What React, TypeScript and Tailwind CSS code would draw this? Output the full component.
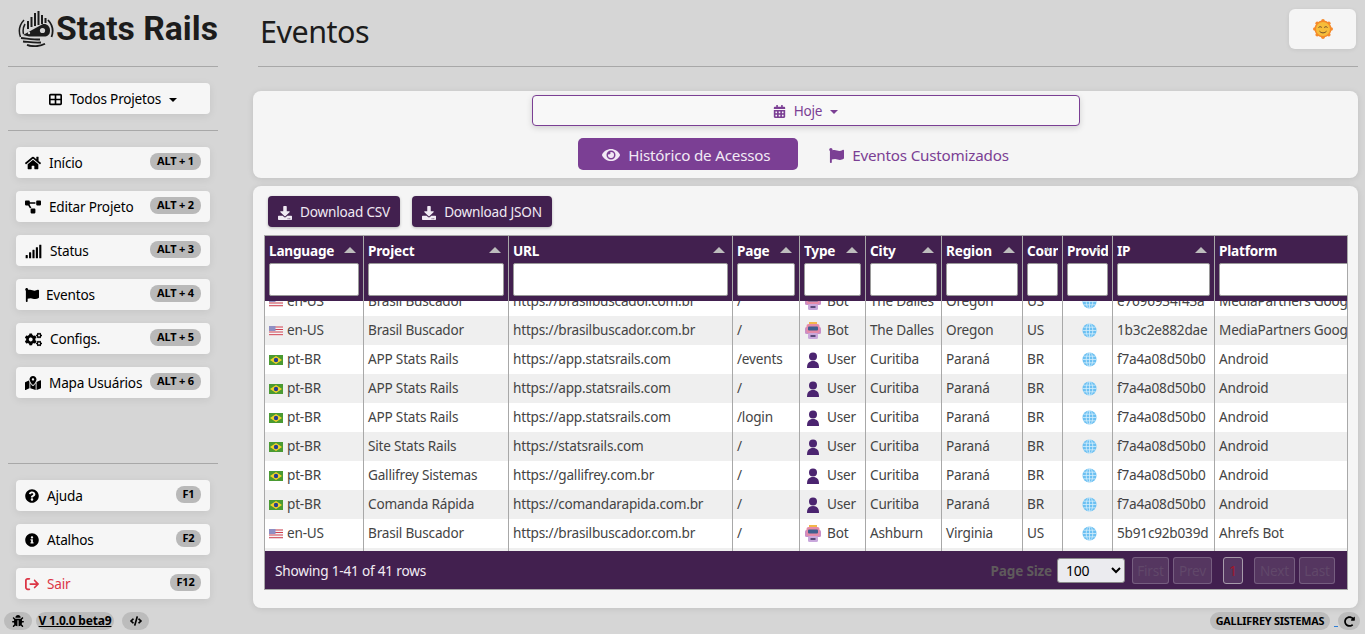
import React from 'react'
import {
  FaBug,
  FaCalendarAlt,
  FaCode,
  FaCogs,
  FaDownload,
  FaEye,
  FaFlag,
  FaHome,
  FaInfoCircle,
  FaMapMarkedAlt,
  FaProjectDiagram,
  FaQuestionCircle,
  FaRedoAlt,
  FaSignal,
} from 'react-icons/fa'
import { FaArrowRightFromBracket, FaTableCellsLarge } from 'react-icons/fa6'

const font = "font-['Noto_Sans','Open_Sans',sans-serif]"
const cols = 'grid grid-cols-[98px_145px_224px_67px_66px_76px_81px_40px_50px_102px_133px]'

const Logo = () => (
  <svg viewBox="0 0 36 36" className="h-[36px] w-[36px] shrink-0" fill="none">
    <path d="M2.500 26A16.500 16.500 0 0 1 6 9M5.500 23A13.500 13.500 0 0 1 7 13" stroke="#1c1c1c" strokeWidth="1.500" />
    <path d="M30 9a16.500 16.500 0 0 1 3.500 17" stroke="#1c1c1c" strokeWidth="1.800" />
    <path d="M10 18v-8M13.500 16V6M17 15V2M20.500 14V0M24 13V4M27.500 12V7" stroke="#1c1c1c" strokeWidth="2" />
    <path d="M5 24 24 13.500c4-1.500 8 1.500 8 6 0 4-2.500 6-6 6H11Z" fill="#1c1c1c" />
    <circle cx="24.500" cy="19.500" r="2.600" fill="#d6d6d6" />
    <circle cx="11" cy="22" r="1.200" fill="#d6d6d6" />
    <path d="M3 27c6 .5 12 1.500 19 1.500M5 30.500c6 .5 11 1.500 18 1M9 33.800c5 2 13 2 18-1" stroke="#1c1c1c" strokeWidth="1.800" />
  </svg>
)

const Sun = () => (
  <svg viewBox="0 0 20 20" className="h-[20px] w-[20px]">
    <circle cx="10" cy="10" r="8.500" fill="#f58a2a" />
    <g fill="#f58a2a">
      <circle cx="10" cy="1.800" r="1.800" />
      <circle cx="10" cy="18.200" r="1.800" />
      <circle cx="1.800" cy="10" r="1.800" />
      <circle cx="18.200" cy="10" r="1.800" />
      <circle cx="4.200" cy="4.200" r="1.800" />
      <circle cx="15.800" cy="4.200" r="1.800" />
      <circle cx="4.200" cy="15.800" r="1.800" />
      <circle cx="15.800" cy="15.800" r="1.800" />
    </g>
    <circle cx="10" cy="10" r="7" fill="#f6bd3a" />
    <path d="M5.500 8.500c1-1 2.500-1 3.300 0M11.200 8.500c1-1 2.500-1 3.300 0M6.500 12.200c2 2.200 5 2.200 7 0" stroke="#6b4a2a" strokeWidth="1" fill="none" />
  </svg>
)

const BrFlag = () => (
  <svg viewBox="0 0 14 10" className="h-[10px] w-[14px] shrink-0">
    <rect width="14" height="10" fill="#4a9a32" />
    <path d="M7 1 13 5 7 9 1 5Z" fill="#f5d327" />
    <circle cx="7" cy="5" r="2.200" fill="#27408f" />
  </svg>
)

const UsFlag = () => (
  <svg viewBox="0 0 14 10" className="h-[10px] w-[14px] shrink-0">
    <rect width="14" height="10" fill="#f4f4f4" />
    <path d="M0 1h14M0 3.500h14M0 6h14M0 8.700h14" stroke="#cf3f4f" strokeWidth="1" />
    <rect width="6.500" height="5" fill="#8f8fc4" />
  </svg>
)

const BotIcon = () => (
  <svg viewBox="0 0 16 18" className="h-[18px] w-[16px] shrink-0">
    <rect x="4" y="0" width="8" height="2" fill="#f2b74a" />
    <rect x="0" y="5" width="16" height="7" rx="1.500" fill="#c98fc8" />
    <rect x="1.500" y="2" width="13" height="9" rx="2" fill="#e58aa8" />
    <rect x="3" y="4.500" width="10" height="4" rx="1" fill="#3f5f8f" />
    <rect x="3" y="11" width="10" height="6" rx="1.500" fill="#c9a8dc" />
    <rect x="5.500" y="13" width="5" height="2" fill="#5a4a7a" />
  </svg>
)

const UserIcon = () => (
  <svg viewBox="0 0 14 16" className="h-[16px] w-[14px] shrink-0">
    <circle cx="7" cy="4.500" r="4" fill="#4b2470" />
    <path d="M1 16c0-5 2-7 6-7s6 2 6 7Z" fill="#4b2470" />
  </svg>
)

const Globe = () => (
  <svg viewBox="0 0 16 16" className="h-[15px] w-[15px]">
    <circle cx="8" cy="8" r="7.500" fill="#6cc0f2" />
    <g stroke="#d8f0fc" strokeWidth="0.800" fill="none">
      <ellipse cx="8" cy="8" rx="3.500" ry="7.500" />
      <path d="M8 .5v15M.5 8h15M1.500 4.500h13M1.500 11.500h13" />
    </g>
  </svg>
)

const Caret = () => (
  <span className="inline-block h-0 w-0 border-x-[4px] border-t-[4.500px] border-x-transparent border-t-current" />
)

const navItems = [
  { icon: <FaHome className="text-[16px]" />, label: 'Início', key: 'ALT + 1', gap: 'gap-2' },
  { icon: <FaProjectDiagram className="text-[16px]" />, label: 'Editar Projeto', key: 'ALT + 2', gap: 'gap-2' },
  { icon: <FaSignal className="text-[17px]" />, label: 'Status', key: 'ALT + 3', gap: 'gap-2' },
  { icon: <FaFlag className="text-[14px]" />, label: 'Eventos', key: 'ALT + 4', gap: 'gap-[7px]' },
  { icon: <FaCogs className="text-[17px]" />, label: 'Configs.', key: 'ALT + 5', gap: 'gap-2' },
  { icon: <FaMapMarkedAlt className="text-[16px]" />, label: 'Mapa Usuários', key: 'ALT + 6', gap: 'gap-2' },
]

const helpItems = [
  { icon: <FaQuestionCircle className="text-[14px]" />, label: 'Ajuda', key: 'F1', gap: 'gap-2', color: 'text-black' },
  { icon: <FaInfoCircle className="text-[14px]" />, label: 'Atalhos', key: 'F2', gap: 'gap-2', color: 'text-black' },
  { icon: <FaArrowRightFromBracket className="text-[14px]" />, label: 'Sair', key: 'F12', gap: 'gap-2', color: 'text-[#dc3545]' },
]

type SideItem = { icon: React.ReactNode; label: string; key: string; gap: string; color?: string }

const SideButton = ({ item }: { item: SideItem }) => (
  <div className={`mx-2 flex h-[31px] items-center justify-between rounded-[4px] bg-[#f6f6f6] pl-[9px] pr-[9px] shadow-[0_2px_8px_rgba(0,0,0,0.08)] ${item.color ?? 'text-black'}`}>
    <span className={`flex items-center whitespace-nowrap pt-[2px] text-[13.600px] ${item.gap}`}>
      {item.icon}
      {item.label}
    </span>
    <span className={`flex h-[17px] -translate-y-[1px] items-center justify-center whitespace-nowrap rounded-[8px] bg-[#b9b9b9] text-[11px] font-bold text-black ${item.key.length > 3 ? 'w-[51px]' : item.key.length > 2 ? 'w-[31px]' : 'w-[25px]'}`}>
      {item.key}
    </span>
  </div>
)

const headers = ['Language', 'Project', 'URL', 'Page', 'Type', 'City', 'Region', 'Country', 'Provider', 'IP', 'Platform']

type Row = {
  lang: 'br' | 'us'
  project: string
  url: string
  page: string
  bot: boolean
  city: string
  region: string
  country: string
  ip: string
  platform: string
}

const dalles = { lang: 'us', project: 'Brasil Buscador', url: 'https://brasilbuscador.com.br', page: '/', bot: true, city: 'The Dalles', region: 'Oregon', country: 'US', platform: 'MediaPartners Google' } as const
const curitiba = { lang: 'br', bot: false, city: 'Curitiba', region: 'Paraná', country: 'BR', ip: 'f7a4a08d50b0', platform: 'Android' } as const

const rows: Row[] = [
  { ...dalles, ip: 'e7696934f43a' },
  { ...dalles, ip: '1b3c2e882dae' },
  { ...curitiba, project: 'APP Stats Rails', url: 'https://app.statsrails.com', page: '/events' },
  { ...curitiba, project: 'APP Stats Rails', url: 'https://app.statsrails.com', page: '/' },
  { ...curitiba, project: 'APP Stats Rails', url: 'https://app.statsrails.com', page: '/login' },
  { ...curitiba, project: 'Site Stats Rails', url: 'https://statsrails.com', page: '/' },
  { ...curitiba, project: 'Gallifrey Sistemas', url: 'https://gallifrey.com.br', page: '/' },
  { ...curitiba, project: 'Comanda Rápida', url: 'https://comandarapida.com.br', page: '/' },
  { lang: 'us', project: 'Brasil Buscador', url: 'https://brasilbuscador.com.br', page: '/', bot: true, city: 'Ashburn', region: 'Virginia', country: 'US', ip: '5b91c92b039d', platform: 'Ahrefs Bot' },
  { ...curitiba, project: 'APP Stats Rails', url: 'https://app.statsrails.com', page: '/' },
]

const cell = 'flex items-center overflow-hidden whitespace-nowrap border-l border-[#a8a8a8] pl-[4px]'

const TableRow = ({ row, index }: { row: Row; index: number }) => (
  <div className={`${cols} h-[29px] text-[13.600px] text-[#444] ${index % 2 ? 'bg-[#efefef]' : 'bg-white'}`}>
    <div className="flex items-center gap-1 overflow-hidden pl-[4px]">
      {row.lang === 'br' ? <BrFlag /> : <UsFlag />}
      {row.lang === 'br' ? 'pt-BR' : 'en-US'}
    </div>
    <div className={cell}>{row.project}</div>
    <div className={cell}>{row.url}</div>
    <div className={cell}>{row.page}</div>
    <div className={`${cell} gap-[5px]`}>
      <span className="flex w-[18px] justify-center">{row.bot ? <BotIcon /> : <UserIcon />}</span>
      {row.bot ? 'Bot' : 'User'}
    </div>
    <div className={cell}>{row.city}</div>
    <div className={cell}>{row.region}</div>
    <div className={cell}>{row.country}</div>
    <div className={`${cell} justify-center pl-0`}><Globe /></div>
    <div className={cell}>{row.ip}</div>
    <div className={cell}>{row.platform}</div>
  </div>
)

const PageButton = ({ label, className }: { label: string; className: string }) => (
  <span className={`flex h-[27px] items-center justify-center rounded-[3px] border border-white/20 bg-white/10 pt-[2px] text-[13.600px] text-[#61486a] ${className}`}>
    {label}
  </span>
)

export default function App() {
  return (
    <div className={`flex h-[634px] w-[1365px] flex-col overflow-hidden bg-[#d6d6d6] tracking-[-0.2px] ${font}`}>
      <div className="flex min-h-0 flex-1 pr-[7px]">
        {/* sidebar */}
        <aside className="ml-2 flex w-[210px] shrink-0 flex-col">
          <div className="flex h-[67px] items-start gap-[2px] border-b border-[#a8a8a8] pl-[10px] pt-[11px]">
            <Logo />
            <span className="whitespace-nowrap font-['Roboto',sans-serif] text-[33.700px] font-bold leading-[36px] tracking-normal text-[#1c1c1c]">Stats Rails</span>
          </div>
          <div className="mx-2 mt-4 flex h-[31px] items-center justify-center gap-2 rounded-[4px] bg-[#f6f6f6] pt-[2px] text-[13.600px] text-black shadow-[0_2px_8px_rgba(0,0,0,0.08)]">
            <FaTableCellsLarge className="text-[13px]" />
            <span>Todos Projetos</span>
            <Caret />
          </div>
          <div className="mt-4 border-b border-[#a8a8a8]" />
          <div className="mt-4 flex flex-col gap-[13px]">
            {navItems.map(item => <SideButton key={item.label} item={item} />)}
          </div>
          <div className="mt-auto border-b border-[#a8a8a8]" />
          <div className="mb-[9px] mt-4 flex flex-col gap-[13px]">
            {helpItems.map(item => <SideButton key={item.label} item={item} />)}
          </div>
        </aside>

        {/* main */}
        <main className="ml-[35px] flex min-w-0 flex-1 flex-col">
          <header className="ml-[5px] flex h-[67px] shrink-0 items-start justify-between border-b border-[#a8a8a8] pr-[2px]">
            <h1 className="ml-[2px] mt-[9px] text-[30.500px] font-normal leading-[44px] tracking-[-0.5px] text-[#1c1c1c]">Eventos</h1>
            <button className="mt-[9px] flex h-[40px] w-[67px] items-center justify-center rounded-[6px] bg-[#f5f5f5] shadow-[0_1px_4px_rgba(0,0,0,0.08)]">
              <Sun />
            </button>
          </header>

          <section className="mt-6 flex h-[87px] shrink-0 flex-col items-center rounded-[8px] bg-[#f5f5f5] pt-1 shadow-[0_1px_6px_rgba(0,0,0,0.1)]">
            <div className="flex h-[31px] w-[548px] items-center justify-center gap-2 rounded-[4px] border border-[#7b3f94] bg-[#f8f8f8] pt-[2px] text-[13.600px] text-[#7b3f94] shadow-[0_2px_6px_rgba(0,0,0,0.15)]">
              <FaCalendarAlt className="text-[13px]" />
              <span>Hoje</span>
              <Caret />
            </div>
            <div className="mt-3 flex text-[15.200px]">
              <span className="flex h-[32px] w-[220px] items-center gap-2 rounded-[5px] bg-[#7b3f94] pl-6 pt-[2px] text-[#f2e9f5]">
                <FaEye className="text-[18px]" />
                Histórico de Acessos
              </span>
              <span className="ml-[7px] flex h-[32px] items-center gap-2 px-6 pt-[2px] text-[#7b3f94]">
                <FaFlag className="text-[15px]" />
                Eventos Customizados
              </span>
            </div>
          </section>

          <section className="mt-2 flex h-[422px] shrink-0 flex-col rounded-[8px] bg-[#f5f5f5] pl-[11px] pt-[10px] shadow-[0_1px_6px_rgba(0,0,0,0.1)]">
            <div className="ml-1 flex gap-3 text-[13.600px] text-[#f0e9f3]">
              <span className="flex h-[31px] w-[132px] items-center justify-center gap-2 rounded-[4px] bg-[#42204f] pt-[2px] shadow-[0_1px_3px_rgba(0,0,0,0.25)]">
                <FaDownload className="text-[14px]" /> Download CSV
              </span>
              <span className="flex h-[31px] w-[140px] items-center justify-center gap-2 rounded-[4px] bg-[#42204f] pt-[2px] shadow-[0_1px_3px_rgba(0,0,0,0.25)]">
                <FaDownload className="text-[14px]" /> Download JSON
              </span>
            </div>

            <div className="mt-2 w-[1084px] border border-[#a8a8a8]">
              <div className={`${cols} relative z-10 h-[65px] bg-[#42204f] text-white`}>
                {headers.map((h, i) => (
                  <div key={h} className={`relative flex flex-col overflow-hidden pl-[4px] pt-[5px] ${i === 10 ? '' : 'pr-[4px]'} ${i ? 'border-l border-[#a8a8a8]' : ''}`}>
                    <span className="h-[22px] overflow-hidden whitespace-nowrap text-[13.600px] font-bold leading-[20px]">{h}</span>
                    {i < 10 && (
                      <svg viewBox="0 0 12 6" className={`absolute top-[11px] ${i === 7 || i === 8 ? 'right-[11px] h-[4px] w-[7px]' : 'right-[7px] h-[6px] w-[12px]'}`}>
                        <path d="M6 0 12 6H0Z" fill="#bdbdbd" />
                      </svg>
                    )}
                    <input aria-label={h} className={`h-[33px] shrink-0 rounded-[2px] border border-[#9a9a9a] bg-white ${i === 10 ? 'w-[160px]' : 'w-full'}`} />
                  </div>
                ))}
              </div>
              <div className="h-[250px] overflow-hidden">
                <div className="-mt-[14px]">
                  {rows.map((r, i) => <TableRow key={i} row={r} index={i} />)}
                </div>
              </div>
              <div className="flex h-[38px] items-center justify-between bg-[#42204f] pl-[10px] pr-[12px] text-[13.600px] text-[#f2ecf4]">
                <span className="pt-[2px]">Showing 1-41 of 41 rows</span>
                <div className="flex items-center">
                  <span className="pt-[2px] font-bold text-[#5f5a5c]">Page Size</span>
                  <select defaultValue="100" aria-label="Page Size" className="ml-[5px] h-[25px] w-[68px] rounded-[3px] border border-[#8a8a8a] bg-[#ebebef] pl-1 text-[14px] text-black">
                    <option>100</option>
                  </select>
                  <PageButton label="First" className="ml-[7px] w-[37px]" />
                  <PageButton label="Prev" className="ml-1 w-[39px]" />
                  <span className="ml-[11px] flex h-[27px] w-[20px] items-center justify-center rounded-[3px] border border-[#a79bab] bg-white/10 pt-[2px] text-[#a3162a]">1</span>
                  <PageButton label="Next" className="ml-[11px] w-[41px]" />
                  <PageButton label="Last" className="ml-1 w-[36px]" />
                </div>
              </div>
            </div>
          </section>
        </main>
      </div>

      {/* status bar */}
      <footer className="mb-1 mt-1 flex h-[18px] shrink-0 items-center justify-between pl-1 pr-[5px] text-[12px] font-bold text-black">
        <div className="flex items-center">
          <span className="flex h-[18px] w-[28px] items-center justify-center rounded-full bg-[#bcbcbc]"><FaBug className="text-[12px]" /></span>
          <span className="ml-1 flex h-[18px] w-[78px] items-center justify-center rounded-full bg-[#bcbcbc] underline">V 1.0.0 beta9</span>
          <span className="ml-2 flex h-[18px] w-[27px] items-center justify-center rounded-full bg-[#bcbcbc]"><FaCode className="text-[12px]" /></span>
        </div>
        <div className="flex items-end">
          <span className="flex h-[18px] w-[120px] items-center justify-center rounded-full bg-[#bcbcbc] text-[10.800px]">GALLIFREY SISTEMAS</span>
          <span className="mb-[3px] ml-[4px] w-[4px] border-b border-[#2f7fd6]" />
          <span className="flex h-[18px] w-[22px] items-center justify-center rounded-full bg-[#bcbcbc]"><FaRedoAlt className="text-[11px]" /></span>
        </div>
      </footer>
    </div>
  )
}
